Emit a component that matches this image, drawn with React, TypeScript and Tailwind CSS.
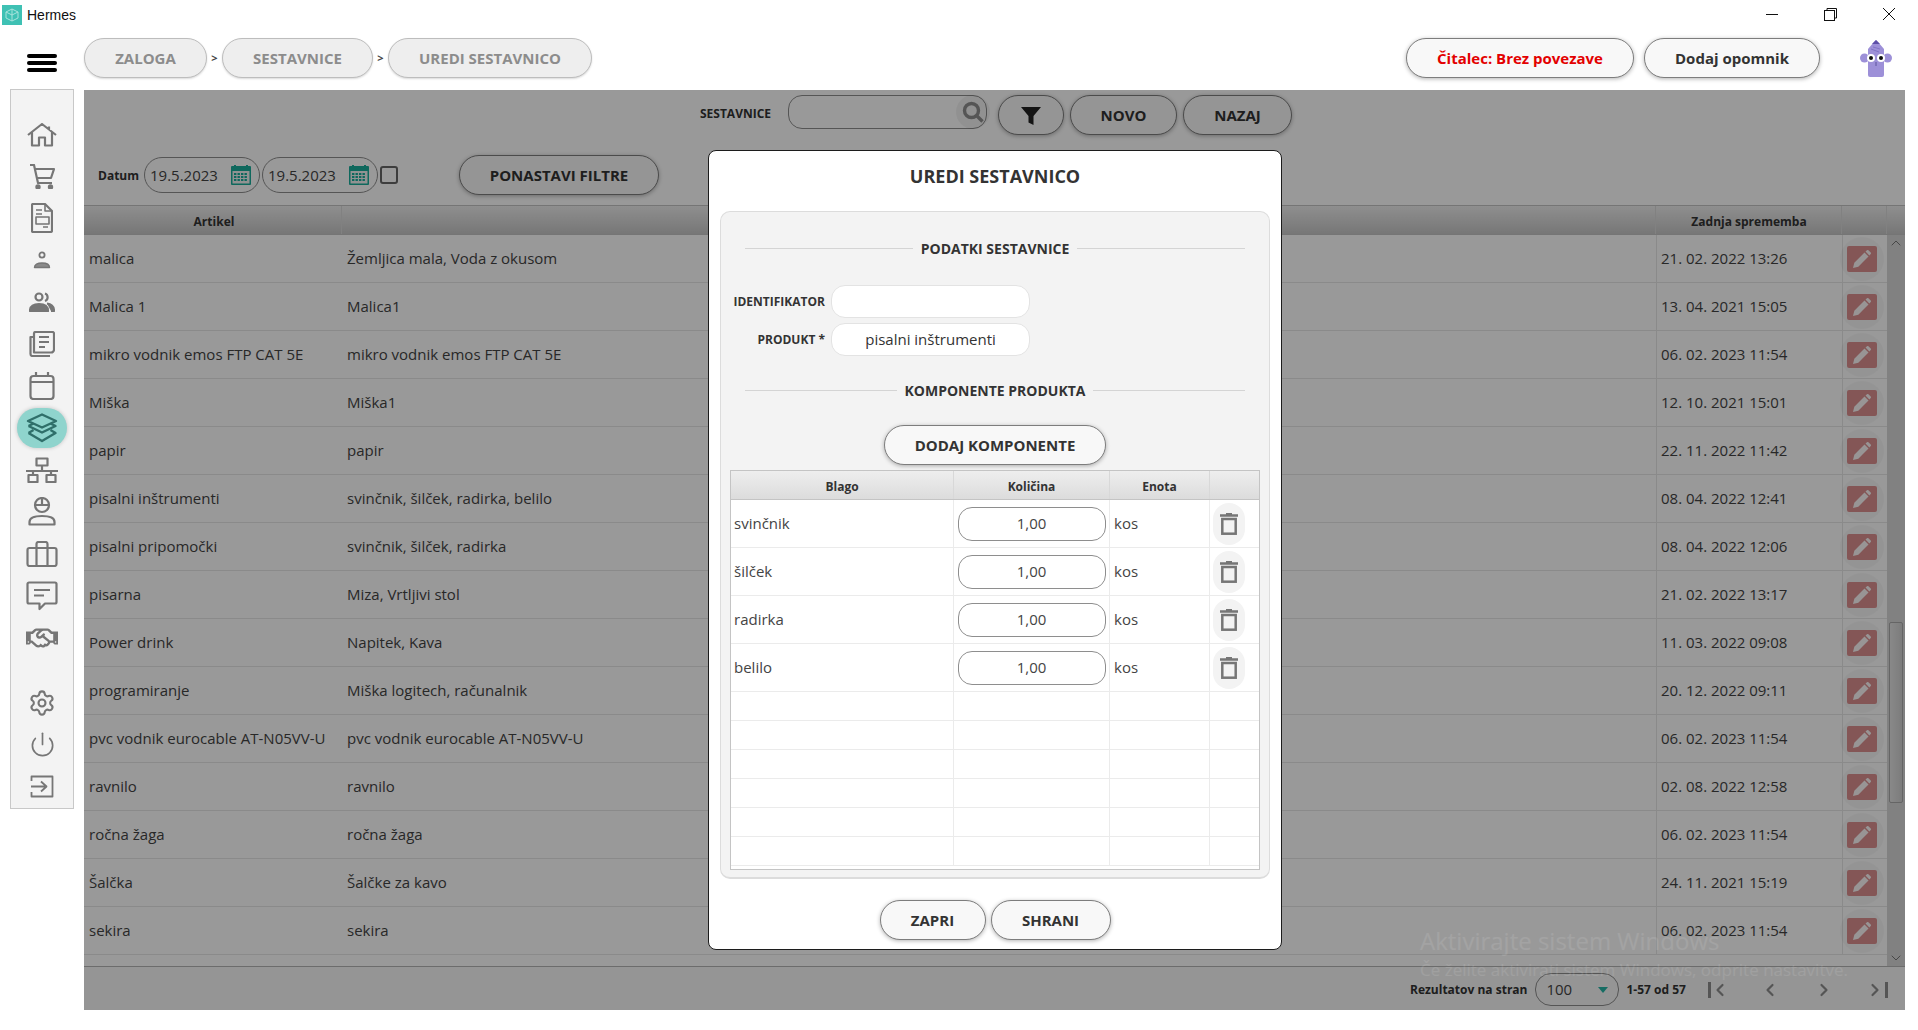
import React from 'react';
import { ChevronLeft, ChevronRight, ChevronUp, ChevronDown, Settings, Power } from 'lucide-react';
import { FaRegHandshake } from 'react-icons/fa';

const rows = [
  ['malica', 'Žemljica mala, Voda z okusom', '21. 02. 2022 13:26'],
  ['Malica 1', 'Malica1', '13. 04. 2021 15:05'],
  ['mikro vodnik emos FTP CAT 5E', 'mikro vodnik emos FTP CAT 5E', '06. 02. 2023 11:54'],
  ['Miška', 'Miška1', '12. 10. 2021 15:01'],
  ['papir', 'papir', '22. 11. 2022 11:42'],
  ['pisalni inštrumenti', 'svinčnik, šilček, radirka, belilo', '08. 04. 2022 12:41'],
  ['pisalni pripomočki', 'svinčnik, šilček, radirka', '08. 04. 2022 12:06'],
  ['pisarna', 'Miza, Vrtljivi stol', '21. 02. 2022 13:17'],
  ['Power drink', 'Napitek, Kava', '11. 03. 2022 09:08'],
  ['programiranje', 'Miška logitech, računalnik', '20. 12. 2022 09:11'],
  ['pvc vodnik eurocable AT-N05VV-U', 'pvc vodnik eurocable AT-N05VV-U', '06. 02. 2023 11:54'],
  ['ravnilo', 'ravnilo', '02. 08. 2022 12:58'],
  ['ročna žaga', 'ročna žaga', '06. 02. 2023 11:54'],
  ['Šalčka', 'Šalčke za kavo', '24. 11. 2021 15:19'],
  ['sekira', 'sekira', '06. 02. 2023 11:54'],
];

const components = ['svinčnik', 'šilček', 'radirka', 'belilo'];

const Ico = ({ w, h, children }: { w: number; h: number; children: React.ReactNode }) => (
  <svg width={w} height={h} viewBox={`0 0 ${w} ${h}`} fill="none" stroke="#767676" strokeWidth="2.2" strokeLinejoin="round">
    {children}
  </svg>
);

const sideTop = [
  <Ico w={30} h={24} key="home">
    <path d="M1 12 15 1l14 11M22 3.5V7M5 9.5V22.5h7V14.5h6v8h7V9.5" />
  </Ico>,
  <Ico w={26} h={25} key="cart">
    <path d="M1 1h4l4 18h14M6 5h19l-3 9H8" />
    <circle cx="9" cy="23" r="1.6" fill="#767676" />
    <circle cx="21.5" cy="23" r="1.6" fill="#767676" />
  </Ico>,
  <Ico w={22} h={30} key="doc">
    <path d="M2 1h12l7 7v19.5a1.5 1.5 0 0 1-1.5 1.5h-17.5a1 1 0 0 1-1-1V2a1 1 0 0 1 1-1Z" />
    <path d="M14 1v7h7M5 7h6M5 11h6M12 24h5" strokeWidth="1.6" />
    <rect x="5" y="14" width="13" height="7" strokeWidth="1.6" />
  </Ico>,
  <Ico w={18} h={18} key="user">
    <circle cx="9" cy="4" r="2.6" strokeWidth="1.8" />
    <path d="M1.5 16.500c0-3 3-4.500 7.500-4.500s7.500 1.500 7.500 4.500Z" fill="#8a8a8a" strokeWidth="1.4" />
  </Ico>,
  <Ico w={26} h={20} key="users">
    <circle cx="10" cy="5" r="3.5" />
    <path d="M16 1.500a4 4 0 0 1 0 7.500" />
    <path d="M1 19c0-5 3.500-7 9-7s9 2 9 7Z" fill="#767676" />
    <path d="M18 11.500c4 .5 7 2.500 7 7.500h-3" fill="#767676" />
  </Ico>,
  <Ico w={26} h={26} key="news">
    <path d="M5 21V2.500a1.500 1.500 0 0 1 1.500-1.500h17a1.500 1.500 0 0 1 1.500 1.500v16a3 3 0 0 1-3 3H5Z" />
    <path d="M5 6H1.500v17a2 2 0 0 0 2 2H21" />
    <path d="M10 6h10M10 11h10M10 16h6" />
  </Ico>,
  <Ico w={26} h={28} key="cal">
    <rect x="1.500" y="4" width="23" height="23" rx="3" />
    <path d="M1.500 10h23M7 0v5M19 0v5" />
  </Ico>,
];

const Layers = () => (
  <svg width="32" height="30" viewBox="0 0 32 30" fill="none" stroke="#2f6f6a" strokeWidth="2.4" strokeLinejoin="round">
    <path d="M16 1.500 30 8l-14 6.500L2 8Z" />
    <path d="M2.500 13 16 19.500 29.500 13l-5-2.500M2.500 13l5-2.500" />
    <path d="M2.500 20 16 28 29.500 20l-5-3M2.500 20l5-3" />
  </svg>
);

const sideBottom = [
  <Ico w={32} h={26} key="net">
    <rect x="10.500" y="1.500" width="11" height="7" />
    <rect x="2.500" y="18" width="9" height="7" />
    <rect x="20.500" y="18" width="9" height="7" />
    <path d="M16 9v5M0 14h32M7 14v4M25 14v4" />
  </Ico>,
  <Ico w={28} h={29} key="worker">
    <circle cx="14" cy="8" r="7" />
    <path d="M7 8h14M14 1v7" />
    <path d="M1.500 27.500v-2.500c0-4 4-6 12.500-6s12.500 2 12.500 6v2.500Z" />
  </Ico>,
  <Ico w={32} h={26} key="case">
    <rect x="1.500" y="7" width="29" height="18" rx="2" />
    <path d="M10.500 25V3a2 2 0 0 1 2-2h7a2 2 0 0 1 2 2v22" />
  </Ico>,
  <Ico w={32} h={30} key="chat">
    <path d="M3 1.500h26a1.500 1.500 0 0 1 1.500 1.500v18a1.500 1.500 0 0 1-1.500 1.500H19L13.500 28V22.500H3A1.500 1.500 0 0 1 1.500 21V3A1.500 1.500 0 0 1 3 1.500Z" />
    <path d="M8 9h16M8 14.500h10" />
  </Ico>,
];

const Trash = () => (
  <svg width="18" height="22" viewBox="0 0 18 22" fill="none" stroke="#767676" strokeWidth="2.500">
    <path d="M0 2.500h18M6 .8h6" />
    <rect x="2.300" y="6" width="13.400" height="14.700" />
  </svg>
);

const Pencil = () => (
  <svg width="18" height="18" viewBox="0 0 18 18" fill="#ffffff" fillOpacity="0.95">
    <path d="M0 18l1.300-5.200L11.500 2.600l4 4L5.300 16.800Z" />
    <path d="M12.500 1.600 14 .3a1 1 0 0 1 1.400 0l2.300 2.300a1 1 0 0 1 0 1.400l-1.300 1.500Z" />
  </svg>
);

const CalendarIcon = () => (
  <svg width="20" height="20" viewBox="0 0 20 20">
    <rect x="0" y="1" width="20" height="19" rx="1" fill="#19ad9b" />
    <rect x="1.500" y="6" width="17" height="12.500" fill="#f4f4f4" />
    <rect x="3" y="0" width="2" height="3" fill="#19ad9b" />
    <rect x="15" y="0" width="2" height="3" fill="#19ad9b" />
    {[8, 11, 14].map((y) =>
      [3, 6.5, 10, 13.500].map((x) => <rect key={`${x}-${y}`} x={x} y={y} width="2.400" height="2" fill="#19ad9b" />)
    )}
  </svg>
);

const Monster = () => (
  <svg width="32" height="38" viewBox="0 0 32 38">
    <circle cx="4.500" cy="19" r="4.500" fill="#9d90d8" />
    <circle cx="27.500" cy="19" r="4.500" fill="#9d90d8" />
    <path d="M8 36V10l6-7 2-2 2 2 6 7v26a2 2 0 0 1-2 2H10a2 2 0 0 1-2-2Z" fill="#9d90d8" />
    <path d="M12 5 16 1l4 4Z" fill="#5d4fa8" />
    <path d="M11 10l8 3M13 8l7 2" stroke="#7a6cc0" strokeWidth="0.8" />
    <circle cx="11" cy="19" r="4" fill="#fff" />
    <circle cx="21" cy="19" r="4" fill="#fff" />
    <circle cx="11" cy="19" r="2" fill="#111" />
    <circle cx="21" cy="19" r="2" fill="#111" />
    <path d="M16 23v4" stroke="#4d4590" strokeWidth="0.8" />
  </svg>
);

const Crumb = ({ label, w }: { label: string; w: string }) => (
  <div className={`${w} h-[40px] rounded-[20px] border border-[#bdbdbd] bg-[#eeeeee] shadow-[0_1px_2px_rgba(0,0,0,0.15)] flex items-center justify-center text-[15px] font-bold text-[#8c8c8c]`}>
    {label}
  </div>
);

const Sep = () => <span className="w-[15px] text-center text-[11px] font-bold text-[#444]">&gt;</span>;

const OuterButton = ({ w, children }: { w: string; children: React.ReactNode }) => (
  <div className={`${w} h-[40px] pt-[1px] rounded-[20px] border border-[#7d7d7d] bg-[#f8f8f8] shadow-[0_1px_4px_rgba(0,0,0,0.3)] flex items-center justify-center text-[15px] font-bold text-[#333]`}>
    {children}
  </div>
);

const DatePill = () => (
  <div className="w-[116px] h-[36px] rounded-[18px] border border-[#8e8e8e] flex items-center justify-between pl-[5px] pr-[8px] text-[15px] text-[#444]">
    19.5.2023
    <CalendarIcon />
  </div>
);

const SectionTitle = ({ label, top }: { label: string; top: string }) => (
  <div className={`${top} mx-[24px] flex items-center gap-[8px]`}>
    <div className="h-px flex-1 bg-[#d4d4d4]" />
    <span className="text-[14px] font-bold text-[#333]">{label}</span>
    <div className="h-px flex-1 bg-[#d4d4d4]" />
  </div>
);

const Field = ({ label, value }: { label: string; value?: string }) => (
  <div className="flex items-center">
    <span className="w-[98px] text-right text-[12px] font-bold text-[#333]">{label}</span>
    <div className="ml-[6px] w-[199px] h-[33px] rounded-[14px] border border-[#e3e3e3] bg-white flex items-center justify-center text-[15px] text-[#333]">
      {value}
    </div>
  </div>
);

export default function App() {
  return (
    <div className="relative w-[1918px] h-[1030px] overflow-hidden bg-white font-['Open_Sans',sans-serif] text-[#333]">
      {/* title bar */}
      <div className="h-[30px] flex items-center font-['Liberation_Sans',sans-serif]">
        <div className="ml-[2px] w-[20px] h-[20px] bg-[#3fc1b4] flex items-center justify-center">
          <svg width="14" height="14" viewBox="0 0 14 14" fill="none" stroke="#a8e3dc" strokeWidth="1">
            <path d="M7 1 13 4v6l-6 3-6-3V4ZM7 1v12M1 4l6 3 6-3" />
          </svg>
        </div>
        <span className="ml-[5px] text-[14px] text-[#111]">Hermes</span>
        <div className="ml-auto -mt-[2px] mr-[23px] flex items-center">
          <div className="w-[12px] h-px bg-[#111]" />
          <svg className="ml-[46px]" width="13" height="13" viewBox="0 0 13 13" fill="none" stroke="#111" strokeWidth="1">
            <rect x="0.500" y="2.500" width="10" height="10" />
            <path d="M3 2.500V.5h9.500V10h-2" />
          </svg>
          <svg className="ml-[46px]" width="12" height="12" viewBox="0 0 12 12" fill="none" stroke="#111" strokeWidth="1">
            <path d="M0 0l12 12M12 0 0 12" />
          </svg>
        </div>
      </div>

      {/* app header */}
      <div className="h-[60px] flex items-start pt-[8px]">
        <div className="ml-[27px] w-[30px] mt-[16px] flex flex-col gap-[3px]">
          <div className="h-[4px] rounded-full bg-black" />
          <div className="h-[4px] rounded-full bg-black" />
          <div className="h-[4px] rounded-full bg-black" />
        </div>
        <div className="ml-[27px] flex items-center">
          <Crumb label="ZALOGA" w="w-[123px]" />
          <Sep />
          <Crumb label="SESTAVNICE" w="w-[151px]" />
          <Sep />
          <Crumb label="UREDI SESTAVNICO" w="w-[204px]" />
        </div>
        <div className="ml-auto flex items-center">
          <OuterButton w="w-[228px]">
            <span className="text-[#e30000]">Čitalec: Brez povezave</span>
          </OuterButton>
          <div className="ml-[10px]">
            <OuterButton w="w-[176px]">Dodaj opomnik</OuterButton>
          </div>
          <div className="ml-[40px] mr-[26px]">
            <Monster />
          </div>
        </div>
      </div>

      <div className="flex items-start">
        {/* sidebar */}
        <div className="ml-[10px] w-[64px] h-[720px] -mt-px border border-[#c8c8c8] bg-[#f3f3f3] flex flex-col items-center pt-[24px] shrink-0">
          {sideTop.map((icon, i) => (
            <div key={i} className="h-[41.800px] flex items-center justify-center">{icon}</div>
          ))}
          <div className="w-[50px] h-[40px] my-[1px] rounded-full bg-[#8fd4cd] shadow-[0_0_4px_rgba(0,0,0,0.2)] flex items-center justify-center">
            <Layers />
          </div>
          {sideBottom.map((icon, i) => (
            <div key={i} className="h-[42px] flex items-center justify-center">{icon}</div>
          ))}
          <div className="h-[42px] flex items-center justify-center">
            <FaRegHandshake size={32} color="#767676" />
          </div>
          <div className="mt-[23px] h-[42px] flex items-center justify-center">
            <Settings size={28} color="#767676" strokeWidth={1.8} />
          </div>
          <div className="h-[42px] flex items-center justify-center">
            <Power size={27} color="#767676" strokeWidth={1.5} />
          </div>
          <div className="h-[42px] flex items-center justify-center">
            <Ico w={24} h={23}>
              <path d="M1.500 6V1.500h21v20h-21V17" strokeWidth="1.800" />
              <path d="M1 11.500h14M11 6.500l5.500 5-5.500 5" strokeWidth="1.800" />
            </Ico>
          </div>
        </div>

        {/* page content, dimmed by the modal overlay */}
        <div className="relative ml-[10px] w-[1821px] h-[920px] bg-white">
          <div className="flex justify-center items-start pt-[5px] pl-[3px]">
            <span className="mt-[10px] text-[12px] font-bold text-[#333]">SESTAVNICE</span>
            <div className="relative ml-[17px] w-[199px] h-[34px] rounded-[14px] border border-[#8e8e8e] flex items-center justify-end">
              <div className="-mr-[4px] w-[34px] h-[34px] rounded-full bg-black/5 flex items-center justify-center">
                <svg width="22" height="22" viewBox="0 0 22 22" fill="none" stroke="#8e8e8e" strokeWidth="3.400">
                  <circle cx="9.500" cy="9.500" r="7" />
                  <path d="m14.500 14.500 6 6" />
                </svg>
              </div>
            </div>
            <div className="ml-[11px]">
              <OuterButton w="w-[66px]">
                <svg width="20" height="20" viewBox="0 0 20 20" fill="#222">
                  <path d="M0 1h20l-7.500 9v9l-5-2.500V10Z" />
                </svg>
              </OuterButton>
            </div>
            <div className="ml-[6px]"><OuterButton w="w-[107px]">NOVO</OuterButton></div>
            <div className="ml-[6px]"><OuterButton w="w-[109px]">NAZAJ</OuterButton></div>
          </div>

          <div className="flex items-center mt-[20px] h-[40px] pl-[14px]">
            <span className="w-[46px] pt-[1px] text-[12px] font-bold text-[#333]">Datum</span>
            <DatePill />
            <div className="ml-[2px]"><DatePill /></div>
            <div className="ml-[2px] w-[18px] h-[18px] rounded-[3px] border-2 border-[#666]" />
            <div className="ml-[61px]"><OuterButton w="w-[200px]">PONASTAVI FILTRE</OuterButton></div>
          </div>

          <div className="mt-[10px] h-[30px] flex border-y border-[#c4c4c4] bg-gradient-to-b from-[#eeeeee] to-[#c6c6c6] text-[12px] font-bold text-[#333]">
            <div className="w-[258px] pt-[3px] pl-[3px] flex items-center justify-center border-r border-[#d8d8d8]">Artikel</div>
            <div className="w-[1314px] border-r border-[#d8d8d8]" />
            <div className="w-[186px] pt-[3px] pl-[1px] flex items-center justify-center border-r border-[#d8d8d8]">Zadnja sprememba</div>
            <div className="w-[45px] border-r border-[#d8d8d8]" />
            <div className="flex-1" />
          </div>

          <div className="h-[731px] flex overflow-hidden">
            <div className="w-[1803px]">
              {rows.map(([name, parts, date]) => (
                <div key={name} className="h-[48px] flex border-b border-[#e6e6e6] text-[15px] text-[#444]">
                  <div className="w-[258px] flex items-center pl-[5px] whitespace-nowrap">{name}</div>
                  <div className="w-[1314px] flex items-center pl-[5px]">{parts}</div>
                  <div className="w-[186px] flex items-center pl-[4px] border-l border-[#e6e6e6]">{date}</div>
                  <div className="w-[45px] flex items-center justify-center pr-[7px] border-l border-[#e6e6e6]">
                    <div className="w-[44px] h-[44px] shrink-0 rounded-full bg-black/3 flex items-center justify-center">
                      <div className="w-[30px] h-[26px] rounded-[2px] bg-[#dc9090] flex items-center justify-center">
                        <Pencil />
                      </div>
                    </div>
                  </div>
                </div>
              ))}
            </div>
            <div className="relative w-[18px] bg-[#d8d8d8] flex flex-col items-center justify-between text-[#777]">
              <ChevronUp size={16} strokeWidth={1.5} />
              <div className="absolute left-[2px] top-[387px] w-[14px] h-[181px] rounded-[2px] border border-[#a8a8a8] bg-gradient-to-r from-[#e4e4e4] to-[#cfcfcf]" />
              <ChevronDown size={16} strokeWidth={1.5} />
            </div>
          </div>

          <div className="h-[44px] border-t border-[#b5b5b5] bg-[#f8f8f8] flex items-center pl-[1326px] text-[12px] font-bold text-[#333]">
            <span className="mt-[2px]">Rezultatov na stran</span>
            <div className="ml-[8px] mt-[2px] w-[84px] h-[33px] rounded-[16px] border border-[#8e8e8e] flex items-center justify-between pl-[10px] pr-[10px] text-[15px] font-normal text-[#444]">
              100
              <div className="w-0 h-0 border-x-[5px] border-x-transparent border-t-[6px] border-t-[#25b5a5]" />
            </div>
            <span className="ml-[7px] mt-[2px]">1-57 od 57</span>
            <div className="ml-[22px] mt-[2px] flex items-center text-[#8e8e8e]">
              <div className="w-[3px] h-[16px] bg-[#8e8e8e]" />
              <ChevronLeft size={20} strokeWidth={2.6} className="-ml-[1px]" />
              <ChevronLeft size={20} strokeWidth={2.6} className="ml-[30px]" />
              <ChevronRight size={20} strokeWidth={2.6} className="ml-[34px]" />
              <ChevronRight size={20} strokeWidth={2.6} className="ml-[31px]" />
              <div className="w-[3px] h-[16px] bg-[#8e8e8e]" />
            </div>
          </div>

          <div className="absolute inset-0 bg-black/40" />

          {/* modal */}
          <div className="absolute left-[624px] top-[60px] w-[574px] h-[800px] rounded-[8px] border border-[#1c1c1c] bg-white flex flex-col items-center">
            <div className="mt-[13px] h-[24px] text-[18px] leading-[24px] font-bold text-[#333]">UREDI SESTAVNICO</div>
            <div className="mt-[23px] w-[550px] h-[668px] rounded-[10px] border border-[#dcdcdc] border-b-2 bg-[#f3f3f3] flex flex-col">
              <SectionTitle label="PODATKI SESTAVNICE" top="mt-[26px]" />
              <div className="mt-[26px] pl-[6px] flex flex-col gap-[5px]">
                <Field label="IDENTIFIKATOR" />
                <Field label="PRODUKT *" value="pisalni inštrumenti" />
              </div>
              <SectionTitle label="KOMPONENTE PRODUKTA" top="mt-[24px]" />
              <div className="mt-[24px] flex justify-center">
                <OuterButton w="w-[222px]">DODAJ KOMPONENTE</OuterButton>
              </div>
              <div className="mt-[5px] mx-[9px] h-[400px] border border-[#c4c4c4] bg-white overflow-hidden">
                <div className="h-[29px] flex border-b border-[#c4c4c4] bg-gradient-to-b from-[#eeeeee] to-[#dcdcdc] text-[12px] font-bold text-[#333]">
                  <div className="w-[223px] pt-[3px] flex items-center justify-center border-r border-[#d8d8d8]">Blago</div>
                  <div className="w-[156px] pt-[3px] flex items-center justify-center border-r border-[#d8d8d8]">Količina</div>
                  <div className="w-[100px] pt-[3px] flex items-center justify-center border-r border-[#d8d8d8]">Enota</div>
                  <div className="flex-1" />
                </div>
                {components.map((name) => (
                  <div key={name} className="h-[48px] flex border-b border-[#ebebeb] text-[15px] text-[#444]">
                    <div className="w-[223px] flex items-center pl-[3px] border-r border-[#ebebeb]">{name}</div>
                    <div className="w-[156px] flex items-center justify-center border-r border-[#ebebeb]">
                      <div className="w-[148px] h-[34px] rounded-[14px] border border-[#8e8e8e] flex items-center justify-center text-[15px]">1,00</div>
                    </div>
                    <div className="w-[100px] flex items-center pl-[4px] border-r border-[#ebebeb]">kos</div>
                    <div className="flex-1 flex items-center pl-[3px]">
                      <div className="w-[32px] h-[42px] rounded-full bg-[#f3f3f3] flex items-center justify-center">
                        <Trash />
                      </div>
                    </div>
                  </div>
                ))}
                {[0, 1, 2, 3, 4, 5].map((i) => (
                  <div key={i} className="h-[29px] flex border-b border-[#ebebeb]">
                    <div className="w-[223px] border-r border-[#ebebeb]" />
                    <div className="w-[156px] border-r border-[#ebebeb]" />
                    <div className="w-[100px] border-r border-[#ebebeb]" />
                  </div>
                ))}
              </div>
            </div>
            <div className="mt-[21px] flex gap-[5px]">
              <OuterButton w="w-[106px]">ZAPRI</OuterButton>
              <OuterButton w="w-[120px]">SHRANI</OuterButton>
            </div>
          </div>

          {/* windows activation watermark */}
          <div className="absolute left-[1336px] top-[836px] text-[24px] leading-[30px] text-white/10 whitespace-nowrap">Aktivirajte sistem Windows</div>
          <div className="absolute left-[1336px] top-[870px] text-[17px] leading-[20px] text-white/10 whitespace-nowrap">Če želite aktivirati sistem Windows, odprite nastavitve.</div>
        </div>
      </div>
    </div>
  );
}
